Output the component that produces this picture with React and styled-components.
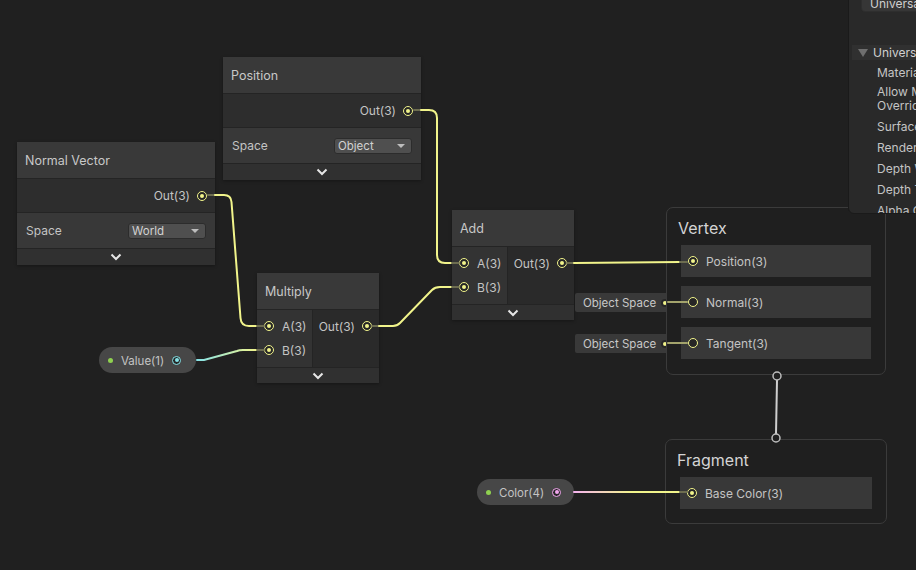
import React from "react";
import styled, { createGlobalStyle } from "styled-components";

const GlobalStyle = createGlobalStyle`
  html, body {
    margin: 0;
    padding: 0;
    background: #202020;
    overflow: hidden;
  }
  * {
    box-sizing: border-box;
  }
`;

const YELLOW = "#f1f48b";
const DIM = "#6d6d50";

const Canvas = styled.div`
  position: relative;
  width: 916px;
  height: 570px;
  background: #202020;
  overflow: hidden;
  font-family: Inter, "Noto Sans", "Liberation Sans", sans-serif;
  font-size: 12px;
  color: #c4c4c4;
`;

// nodes sit on a free canvas, so their place is the content itself
const Node = styled.div`
  position: absolute;
  left: ${(p) => p.$x}px;
  top: ${(p) => p.$y}px;
  width: ${(p) => p.$w}px;
  background: #2e2e2e;
  box-shadow: 0 1px 3px rgba(0, 0, 0, 0.35);
  z-index: 1;
`;

const NodeHeader = styled.div`
  height: 36px;
  display: flex;
  align-items: center;
  padding-left: 8px;
  background: #393939;
  font-size: 12.5px;
  color: #c8c8c8;
`;

const OutRow = styled.div`
  height: 34px;
  display: flex;
  align-items: center;
  justify-content: flex-end;
  gap: 7px;
  padding-right: 8px;
  background: #2d2d2d;
  border-top: 1px solid #242424;
`;

const ControlRow = styled.div`
  height: 36px;
  display: flex;
  align-items: center;
  justify-content: space-between;
  padding: 0 9px;
  background: #383838;
  border-top: 1px solid #242424;
`;

const Dropdown = styled.div`
  width: 78px;
  height: 16px;
  display: flex;
  align-items: center;
  justify-content: space-between;
  padding: 0 6px 0 3px;
  background: #4f4f4f;
  border: 1px solid #2c2c2c;
  border-radius: 3px;
  color: #d2d2d2;
  font-size: 11.5px;
`;

const Caret = styled.span`
  width: 0;
  height: 0;
  border-left: 4px solid transparent;
  border-right: 4px solid transparent;
  border-top: 4px solid #bdbdbd;
`;

const CollapseRow = styled.div`
  height: ${(p) => p.$h || 17}px;
  display: flex;
  align-items: center;
  justify-content: center;
  background: #303030;
  border-top: 1px solid #242424;
`;

const PortArea = styled.div`
  height: 58px;
  display: grid;
  grid-template-columns: 55px minmax(0, 1fr);
  border-top: 1px solid #242424;
  overflow: hidden;
`;

const InputCol = styled.div`
  display: flex;
  flex-direction: column;
  padding-top: 4px;
  background: #333333;
`;

const OutputCol = styled.div`
  display: flex;
  justify-content: flex-end;
  align-items: flex-start;
  padding: 4px 7px 0 0;
  background: #2a2a2a;
  border-left: 1px solid #242424;
  white-space: nowrap;
`;

const PortLine = styled.div`
  height: 24px;
  display: flex;
  align-items: center;
  gap: ${(p) => p.$gap || 8}px;
  padding-left: ${(p) => p.$pl || 7}px;
`;

const Port = styled.span`
  position: relative;
  flex: none;
  width: 10px;
  height: 10px;
  border-radius: 50%;
  border: 1.5px solid ${(p) => p.$c || YELLOW};
  background: #262626;
  &::after {
    content: "";
    position: absolute;
    left: 50%;
    top: 50%;
    width: 4px;
    height: 4px;
    margin: -2px 0 0 -2px;
    border-radius: 50%;
    background: ${(p) => (p.$hollow ? "transparent" : p.$c || YELLOW)};
  }
`;

const Context = styled.div`
  position: absolute;
  left: ${(p) => p.$x}px;
  top: ${(p) => p.$y}px;
  width: ${(p) => p.$w}px;
  height: ${(p) => p.$h}px;
  display: flex;
  flex-direction: column;
  gap: 9px;
  padding: 0 14px;
  background: #1f1f1f;
  border: 1px solid #3b3b3b;
  border-radius: 7px;
  z-index: 1;
`;

const ContextTitle = styled.div`
  height: 28px;
  display: flex;
  align-items: flex-end;
  margin: 0 -3px;
  font-size: 16px;
  line-height: 16px;
  color: #d4d4d4;
`;

const Block = styled.div`
  height: 32px;
  display: flex;
  align-items: center;
  gap: 8px;
  padding-left: 7px;
  background: #383838;
  color: #c4c4c4;
`;

const SpacePill = styled.div`
  position: absolute;
  left: ${(p) => p.$x}px;
  top: ${(p) => p.$y}px;
  width: 100px;
  height: 19px;
  display: flex;
  align-items: center;
  justify-content: space-between;
  padding: 0 6px 0 8px;
  background: #393939;
  border-radius: 2px;
  color: #c8c8c8;
  font-size: 11.5px;
  z-index: 1;
`;

const SmallDot = styled.span`
  flex: none;
  width: 8px;
  height: 8px;
  border-radius: 50%;
  background: #262626;
  display: flex;
  align-items: center;
  justify-content: center;
  &::after {
    content: "";
    width: 4px;
    height: 4px;
    border-radius: 50%;
    background: ${YELLOW};
  }
`;

const PropertyPill = styled.div`
  position: absolute;
  left: ${(p) => p.$x}px;
  top: ${(p) => p.$y}px;
  width: 97px;
  height: 26px;
  display: flex;
  align-items: center;
  gap: 8px;
  padding-left: 9px;
  background: #474747;
  border-radius: 13px;
  color: #c4c4c4;
  font-size: 11.5px;
  z-index: 1;
`;

const GreenDot = styled.span`
  flex: none;
  width: 5px;
  height: 5px;
  border-radius: 50%;
  background: #8fd150;
`;

const PillLabel = styled.span`
  flex: 1;
  padding-top: 2px;
`;

const PillPort = styled(Port)`
  margin-right: 15px;
  width: 9px;
  height: 9px;
`;

const Inspector = styled.div`
  position: absolute;
  left: 848px;
  top: -12px;
  width: 120px;
  height: 226px;
  display: flex;
  flex-direction: column;
  background: #292929;
  border: 1px solid #1a1a1a;
  border-radius: 0 0 0 6px;
  overflow: hidden;
  white-space: nowrap;
  z-index: 3;
`;

const TargetBox = styled.div`
  height: 28px;
  margin-left: 12px;
  padding: 6px 0 0 8px;
  background: #363636;
  border: 1px solid #2e2e2e;
  border-radius: 4px;
  color: #cfcfcf;
  font-size: 12px;
`;

const SectionRow = styled.div`
  height: 20px;
  margin: 33px 0 0 3px;
  display: flex;
  align-items: center;
  gap: 5px;
  padding-left: 6px;
  background: #303030;
  color: #d0d0d0;
  font-size: 12px;
`;

const Triangle = styled.span`
  width: 0;
  height: 0;
  border-left: 5px solid transparent;
  border-right: 5px solid transparent;
  border-top: 8px solid #6f6f6f;
`;

const ItemList = styled.div`
  display: flex;
  flex-direction: column;
  padding: 2px 0 0 28px;
`;

const Item = styled.div`
  line-height: 14px;
  padding: ${(p) => (p.$tight ? "1.5px 0 3.5px" : "3.5px 0")};
  color: #c4c4c4;
  font-size: 12px;
`;

const Wires = styled.svg`
  position: absolute;
  left: 0;
  top: 0;
  pointer-events: none;
  z-index: 2;
`;

const Chevron = () => (
  <svg width="12" height="8" viewBox="0 0 12 8">
    <path d="M1.5 1.5 L6 6 L10.5 1.5" fill="none" stroke="#e6e6e6" strokeWidth="2" />
  </svg>
);

const SpaceNode = ({ x, y, title, space }) => (
  <Node $x={x} $y={y} $w={198}>
    <NodeHeader>{title}</NodeHeader>
    <OutRow>
      <span>Out(3)</span>
      <Port />
    </OutRow>
    <ControlRow>
      <span>Space</span>
      <Dropdown>
        <span>{space}</span>
        <Caret />
      </Dropdown>
    </ControlRow>
    <CollapseRow>
      <Chevron />
    </CollapseRow>
  </Node>
);

const MathNode = ({ x, y, title }) => (
  <Node $x={x} $y={y} $w={122}>
    <NodeHeader>{title}</NodeHeader>
    <PortArea>
      <InputCol>
        <PortLine $pl={7}>
          <Port />
          <span>A(3)</span>
        </PortLine>
        <PortLine $pl={7}>
          <Port />
          <span>B(3)</span>
        </PortLine>
      </InputCol>
      <OutputCol>
        <PortLine $gap={7} $pl={0}>
          <span>Out(3)</span>
          <Port />
        </PortLine>
      </OutputCol>
    </PortArea>
    <CollapseRow $h={16}>
      <Chevron />
    </CollapseRow>
  </Node>
);

const stub = (x1, x2, y) => (
  <line x1={x1} y1={y} x2={x2} y2={y} stroke={DIM} strokeWidth="2" />
);

export default function App() {
  return (
    <Canvas>
      <GlobalStyle />

      <SpaceNode x={223} y={57} title="Position" space="Object" />
      <SpaceNode x={17} y={142} title="Normal Vector" space="World" />
      <MathNode x={257} y={273} title="Multiply" />
      <MathNode x={452} y={210} title="Add" />

      <PropertyPill $x={99} $y={347}>
        <GreenDot />
        <PillLabel>Value(1)</PillLabel>
        <PillPort $c="#86e3e8" />
      </PropertyPill>
      <PropertyPill $x={477} $y={479}>
        <GreenDot />
        <PillLabel>Color(4)</PillLabel>
        <PillPort $c="#f2a6ee" />
      </PropertyPill>

      <SpacePill $x={575} $y={293}>
        <span>Object Space</span>
        <SmallDot />
      </SpacePill>
      <SpacePill $x={575} $y={334}>
        <span>Object Space</span>
        <SmallDot />
      </SpacePill>

      <Context $x={666} $y={207} $w={220} $h={168}>
        <ContextTitle>Vertex</ContextTitle>
        <Block>
          <Port />
          <span>Position(3)</span>
        </Block>
        <Block>
          <Port $hollow />
          <span>Normal(3)</span>
        </Block>
        <Block>
          <Port $hollow />
          <span>Tangent(3)</span>
        </Block>
      </Context>

      <Context $x={665} $y={439} $w={222} $h={85}>
        <ContextTitle>Fragment</ContextTitle>
        <Block>
          <Port />
          <span>Base Color(3)</span>
        </Block>
      </Context>

      <Inspector>
        <TargetBox>Universal</TargetBox>
        <SectionRow>
          <Triangle />
          <span>Universal</span>
        </SectionRow>
        <ItemList>
          <Item>Material</Item>
          <Item $tight>
            Allow Material
            <br />
            Override
          </Item>
          <Item>Surface Type</Item>
          <Item>Render Face</Item>
          <Item>Depth Write</Item>
          <Item>Depth Test</Item>
          <Item>Alpha Clipping</Item>
        </ItemList>
      </Inspector>

      <Wires width="916" height="570" viewBox="0 0 916 570">
        <defs>
          <linearGradient id="cyanWire" x1="0" x2="1" y1="0" y2="0">
            <stop offset="0" stopColor="#86e3e8" />
            <stop offset="1" stopColor={YELLOW} />
          </linearGradient>
          <linearGradient id="pinkWire" gradientUnits="userSpaceOnUse" x1="574" y1="0" x2="680" y2="0">
            <stop offset="0" stopColor="#f4b3ee" />
            <stop offset="0.55" stopColor={YELLOW} />
            <stop offset="1" stopColor={YELLOW} />
          </linearGradient>
        </defs>
        <g fill="none" strokeLinecap="round">
          {stub(208, 215, 195)}
          <path d="M215 195 L224 195 Q231 195 231.5 202 L240.5 318 Q241 326 249 326 L257 326" stroke={YELLOW} strokeWidth="2" />
          {stub(257, 264, 326)}

          {stub(414, 421, 110)}
          <path d="M421 110 L429 110 Q437 110 437 118 L437 255 Q437 263 445 263 L452 263" stroke={YELLOW} strokeWidth="2" />
          {stub(452, 459, 263)}

          {stub(372, 379, 326)}
          <path d="M379 326 L393 326 Q397 326 400 323 L432 290 Q435 287 440 287 L452 287" stroke={YELLOW} strokeWidth="2" />
          {stub(452, 459, 287)}

          <path d="M197 360 L204 360 L237 351 Q239 350 243 350 L257 350" stroke="url(#cyanWire)" strokeWidth="2" />
          {stub(257, 264, 350)}

          {stub(567, 574, 263)}
          <path d="M574 263 L680 262" stroke={YELLOW} strokeWidth="2" />
          {stub(680, 687, 262)}

          <line x1="668" y1="302" x2="687" y2="302" stroke="#a3a36c" strokeWidth="2" />
          <line x1="668" y1="343" x2="687" y2="343" stroke="#a3a36c" strokeWidth="2" />

          <path d="M574 492 L680 492" stroke="url(#pinkWire)" strokeWidth="2" />
          {stub(680, 687, 492)}

          <line x1="777" y1="380" x2="776" y2="434" stroke="#cfcfcf" strokeWidth="2" />
          <circle cx="777" cy="376" r="4" fill="#202020" stroke="#bdbdbd" strokeWidth="1.5" />
          <circle cx="776" cy="438" r="4" fill="#202020" stroke="#bdbdbd" strokeWidth="1.5" />
        </g>
      </Wires>
    </Canvas>
  );
}
